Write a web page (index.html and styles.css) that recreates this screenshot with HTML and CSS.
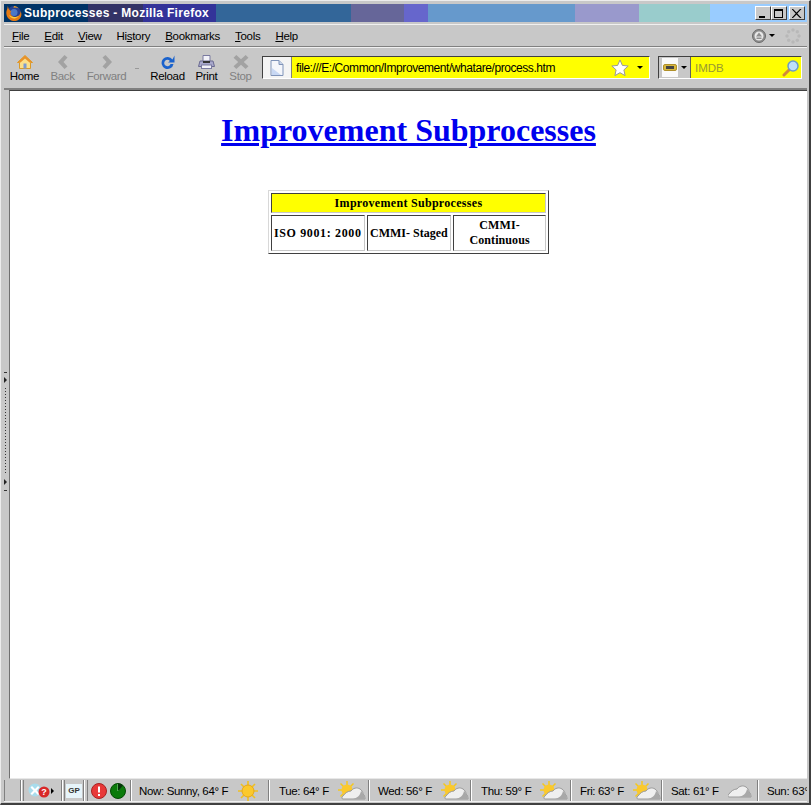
FILE: index.html
```html
<!DOCTYPE html>
<html lang="en">
<head>
<meta charset="utf-8">
<title>Subprocesses - Mozilla Firefox</title>
<link rel="stylesheet" href="styles.css">
</head>
<body>
<div class="window">
  <header class="titlebar">
    <svg class="fx-logo" width="17" height="17" viewBox="0 0 17 17"><circle cx="9" cy="8" r="7" fill="#27408f"/><circle cx="9" cy="7.500" r="3.500" fill="#4a78c8"/><path d="M2.500 1.500C3 3 2 4 1.500 6 .5 10 3 15 8 16c4 .7 7.500-2 8.300-5.500.3-1.500 0-3-.8-4.500.2 2.500-1 4.500-3 5.500-2.500 1-5 .3-6.300-1.500-1-1.300-.9-3 .3-4-1.500-.2-3-1.500-3.500-4.500z" fill="#e57a14"/><path d="M4 10c1 2.500 4 4 6.500 3.300 1.500-.4 2.800-1.500 3.500-2.800-1.500 1.300-3.500 1.800-5.500 1.500C7 11.700 5.300 11 4 10z" fill="#f9cf3c"/><path d="M9 1c2 0 3.500 1 4.500 2.500-1.500-1-3.500-1.300-5-.5z" fill="#f2a21f"/></svg>
    <span class="title-text">Subprocesses - Mozilla Firefox</span>
    <div class="win-controls">
      <button class="win-btn"><svg width="10" height="9" viewBox="0 0 10 9"><rect x="1" y="7" width="6" height="2" fill="#000"/></svg></button>
      <button class="win-btn"><svg width="10" height="9" viewBox="0 0 10 9"><path d="M0 0h9v9H0zM1 2v6h7V2z" fill="#000" fill-rule="evenodd"/></svg></button>
      <button class="win-btn win-btn-close"><svg width="10" height="9" viewBox="0 0 10 9"><path d="M1 0l3.500 3.500L8 0h1.500L5.300 4.500 9.500 9H8L4.500 5.500 1 9H-.5l4.200-4.500L-.5 0z" fill="#000"/></svg></button>
    </div>
  </header>

  <nav class="menubar">
    <span class="menu-item"><u>F</u>ile</span>
    <span class="menu-item"><u>E</u>dit</span>
    <span class="menu-item"><u>V</u>iew</span>
    <span class="menu-item">Hi<u>s</u>tory</span>
    <span class="menu-item"><u>B</u>ookmarks</span>
    <span class="menu-item"><u>T</u>ools</span>
    <span class="menu-item"><u>H</u>elp</span>
    <div class="menu-right">
      <svg width="14" height="14" viewBox="0 0 14 14"><circle cx="7" cy="7" r="6.500" fill="#8e8e8e" stroke="#6a6a6a"/><circle cx="7" cy="7" r="4.500" fill="#e8e8e8"/><path d="M7 3.500l3 4H4z" fill="#8e8e8e"/><rect x="4.500" y="8.500" width="5" height="1.500" fill="#8e8e8e"/></svg>
      <span class="tiny-arrow"></span>
      <svg class="throbber" width="16" height="16" viewBox="0 0 16 16"><g fill="#b8b8b8"><circle cx="8" cy="2" r="1.700"/><circle cx="12.300" cy="3.700" r="1.700"/><circle cx="14" cy="8" r="1.700"/><circle cx="12.300" cy="12.300" r="1.700"/><circle cx="8" cy="14" r="1.700"/><circle cx="3.700" cy="12.300" r="1.700"/><circle cx="2" cy="8" r="1.700"/><circle cx="3.700" cy="3.700" r="1.700"/></g></svg>
    </div>
  </nav>

  <div class="toolbar">
    <div class="tool tool-home">
      <svg width="16" height="14" viewBox="0 0 16 14"><path d="M8 .5L.5 7.500h2V13.500h11V7.500h2z" fill="#fbe08a" stroke="#d99a2a"/><path d="M8 .5L.5 7.500h3L8 3.500l4.500 4h3z" fill="#e8912a"/><rect x="6.500" y="8.500" width="3" height="5" fill="#7d9ad0"/></svg>
      <span>Home</span>
    </div>
    <div class="tool tool-back off">
      <svg width="12" height="14" viewBox="0 0 12 14"><path d="M7.500 0l3 2.500L6.500 7l4 4.500-3 2.500L1 7z" fill="#a2a2a2"/></svg>
      <span>Back</span>
    </div>
    <div class="tool tool-forward off">
      <svg width="12" height="14" viewBox="0 0 12 14"><path d="M4.500 0l-3 2.500L5.500 7l-4 4.500 3 2.500L11 7z" fill="#a2a2a2"/></svg>
      <span>Forward</span>
    </div>
    <span class="drop-mark"></span>
    <div class="tool tool-reload">
      <svg width="15" height="14" viewBox="0 0 15 14"><path d="M12.500 4.500A6 6 0 1 0 13.500 9h-3a3.200 3.200 0 1 1-.6-3L8 7.500h6.500V.5z" fill="#1a62cc"/></svg>
      <span>Reload</span>
    </div>
    <div class="tool tool-print">
      <svg width="17" height="14" viewBox="0 0 17 14"><path d="M5 .5h7v6H5z" fill="#f2f2f8" stroke="#7a7aa0"/><path d="M2 6h13l1.500 5.500H.5z" fill="#a8a8cc" stroke="#6a6a90"/><rect x="3.500" y="10" width="10" height="3.500" fill="#f2f2f8" stroke="#7a7aa0"/><rect x="5" y="6" width="7" height="2" fill="#333"/></svg>
      <span>Print</span>
    </div>
    <div class="tool tool-stop off">
      <svg width="16" height="15" viewBox="0 0 16 15"><path d="M3 0l5 4.500L13 0l3 3-5 4.500 5 4.500-3 3-5-4.500L3 15l-3-3 5-4.500L0 3z" fill="#a2a2a2"/></svg>
      <span>Stop</span>
    </div>
    <div class="urlbar">
      <span class="site-icon"><svg width="14" height="16" viewBox="0 0 14 16"><path d="M1 .5h8l4 4v11H1z" fill="#f4f6fb" stroke="#7f93b8"/><path d="M9 .5v4h4" fill="#c9d4ea" stroke="#7f93b8"/><path d="M2 8l9 7H2z" fill="#c8d8f4"/></svg></span>
      <span class="url-text">file:///E:/Common/Improvement/whatare/process.htm</span>
      <svg class="star" width="18" height="17" viewBox="0 0 18 17"><path d="M9 1l2.400 5.400 5.800.6-4.300 3.900 1.200 5.700L9 13.700l-5.100 2.900 1.200-5.700L.8 7l5.800-.6z" fill="#fff" stroke="#999"/></svg>
      <span class="tiny-arrow url-arrow"></span>
    </div>
    <div class="searchbar">
      <span class="engine"><span class="engine-icon"><svg width="14" height="7" viewBox="0 0 14 7"><rect x=".5" y=".5" width="13" height="6" rx="1.500" fill="#d8b840" stroke="#b0902a"/><rect x="3" y="2" width="8" height="3" fill="#444"/></svg></span><span class="tiny-arrow"></span></span>
      <span class="search-text">IMDB</span>
      <svg class="glass" width="18" height="18" viewBox="0 0 18 18"><path d="M7 11L2 16" stroke="#d08a3c" stroke-width="3" stroke-linecap="round"/><circle cx="11" cy="7" r="5" fill="#bfe0f8" stroke="#6a9cc8" stroke-width="1.500"/></svg>
    </div>
  </div>

  <div class="body-row">
    <aside class="sidebar">
      <span class="dash"></span>
      <span class="grip-arrow"></span>
      <span class="dots"></span>
      <span class="grip-arrow"></span>
      <span class="dash"></span>
    </aside>
    <main class="page">
      <h1 class="page-title"><a href="#">Improvement Subprocesses</a></h1>
      <table class="process-table">
        <tr><th colspan="3" class="head-cell">Improvement Subprocesses</th></tr>
        <tr>
          <td class="cell-iso">ISO 9001: 2000</td>
          <td class="cell-staged">CMMI- Staged</td>
          <td class="cell-cont">CMMI- Continuous</td>
        </tr>
      </table>
    </main>
  </div>

  <footer class="statusbar">
    <div class="panel panel-blank"></div>
    <div class="panel panel-tools">
      <svg width="26" height="15" viewBox="0 0 26 15"><circle cx="7" cy="7" r="6.500" fill="#a8dcec"/><path d="M4 3l3 3 3-3 1.500 1.500-3 3 3 3L10 12 7 9l-3 3-1.500-1.500 3-3-3-3z" fill="#fff"/><circle cx="16" cy="9" r="5.500" fill="#d82828"/><text x="16" y="12" class="q">?</text><path d="M23 5l3 3-3 3z" fill="#000"/></svg>
    </div>
    <div class="panel panel-gp"><span>GP</span></div>
    <div class="panel panel-alerts">
      <svg width="16" height="16" viewBox="0 0 16 16"><circle cx="8" cy="8" r="7.500" fill="#e83838" stroke="#a82020"/><rect x="7" y="3.500" width="2" height="6" fill="#fff"/><rect x="7" y="11" width="2" height="2" fill="#fff"/></svg>
      <svg width="16" height="16" viewBox="0 0 16 16"><circle cx="8" cy="8" r="7.500" fill="#0a7a0a" stroke="#044a04"/><path d="M8 8V1" stroke="#9ad89a"/><path d="M8 8V.5a7.500 7.500 0 0 1 5 2z" fill="#06350a"/></svg>
    </div>
    <div class="panel wx wx-now"><span class="wx-text">Now: Sunny, 64° F</span>
      <svg class="i-sun" width="20" height="20" viewBox="0 0 20 20"><g stroke="#f0c020" stroke-width="1.600"><path d="M10 0v20M0 10h20M3 3l14 14M17 3L3 17"/></g><circle cx="10" cy="10" r="6" fill="#fbc92c" stroke="#e8a818"/></svg>
    </div>
    <div class="panel wx wx-tue"><span class="wx-text">Tue: 64° F</span><svg class="i-pc" width="28" height="20" viewBox="0 0 28 20"><use href="#pc"/></svg></div>
    <div class="panel wx wx-wed"><span class="wx-text">Wed: 56° F</span><svg class="i-pc" width="28" height="20" viewBox="0 0 28 20"><use href="#pc"/></svg></div>
    <div class="panel wx wx-thu"><span class="wx-text">Thu: 59° F</span><svg class="i-pc" width="28" height="20" viewBox="0 0 28 20"><use href="#pc"/></svg></div>
    <div class="panel wx wx-fri"><span class="wx-text">Fri: 63° F</span><svg class="i-pc" width="28" height="20" viewBox="0 0 28 20"><use href="#pc"/></svg></div>
    <div class="panel wx wx-sat"><span class="wx-text">Sat: 61° F</span><svg class="i-cloud" width="24" height="14" viewBox="4 5 24 14"><use href="#cloud"/></svg></div>
    <div class="panel wx wx-sun"><span class="wx-text">Sun: 63°</span></div>
  </footer>
  <svg class="defs" width="0" height="0">
    <defs>
      <g id="cloud">
        <path d="M5 18c-1.500 0-1.500-2 0-3 2-3 5-5 8-5 2-3 6-4 9-2 2 1.500 3 3 3 5 1.500 1 2 3 2 5z" fill="#efefef" stroke="#9a9a9a"/>
        <path d="M15 18c4-1 7-3 8-8 1.500 1 2 2 2 3 1.500 1 2 3 2 5z" fill="#a8a8a8"/>
      </g>
      <g id="pc"><g stroke="#f6c81c" stroke-width="1.500"><path d="M9 0v18M0 9h18M2.500 2.500l13 13M15.500 2.500l-13 13"/></g><circle cx="9" cy="9" r="5.500" fill="#fbc92c"/><use href="#cloud"/></g>
    </defs>
  </svg>
</div>
</body>
</html>
```
FILE: styles.css
```css
* { box-sizing: border-box; }
html, body { margin: 0; padding: 0; height: 100%; overflow: hidden; }
body { background: #c8c8c8; font-family: "Liberation Sans", Arial, sans-serif; font-size: 12px; color: #000; }
.window {
  width: 811px; height: 805px; display: flex; flex-direction: column;
  padding: 3px 2px 1px 3px; background: #c8c8c8;
  border-top: 1px solid #ececec; border-left: 1px solid #ececec;
  border-right: 2px solid #404040; border-bottom: 2px solid #404040;
}
.titlebar {
  height: 18px; flex: none; display: flex; align-items: center; padding: 0 2px 0 1px;
  background: linear-gradient(to right,
    #003366 0 84px, #333366 84px 139px, #333399 139px 212px, #336699 212px 347px,
    #666699 347px 400px, #6666cc 400px 424px, #6699cc 424px 571px, #9999cc 571px 635px,
    #99cccc 635px 706px, #99ccff 706px 803px);
}
.fx-logo { flex: none; }
.title-text { margin-left: 2px; color: #fff; font-weight: bold; font-size: 12px; letter-spacing: .3px; font-family: "Liberation Sans", sans-serif; }
.win-controls { margin-left: auto; display: flex; }
.win-btn {
  width: 16px; height: 14px; padding: 0; display: flex; align-items: center; justify-content: center;
  background: #c8c8c8; border: 1px solid; border-color: #fff #404040 #404040 #fff;
}
.win-btn-close { margin-left: 2px; }
.menubar {
  height: 23px; flex: none; margin-top: 2px; display: flex; align-items: center; padding-left: 8px; gap: 15px;
  border-top: 1px solid #f0f0f0; border-bottom: 1px solid #808080;
}
.menu-item { font-size: 11.500px; letter-spacing: -0.3px; }
.menu-right { margin-left: auto; display: flex; align-items: center; padding-right: 6px; gap: 3px; }
.tiny-arrow { display: inline-block; width: 0; height: 0; border: 3px solid transparent; border-top-color: #000; border-bottom: 0; }
.throbber { margin-left: 7px; }
.toolbar {
  height: 43px; flex: none; display: flex; align-items: flex-start; padding-left: 6px;
  border-top: 1px solid #f0f0f0; border-bottom: 2px solid #808080;
}
.tool { display: flex; flex-direction: column; align-items: center; font-size: 11.500px; letter-spacing: -0.35px; padding-top: 7px; height: 39px; }
.tool svg { height: 14px; }
.tool span { margin-top: 1px; line-height: 13px; }
.tool.off { color: #808080; }
.tool-home { width: 29px; }
.tool-back { width: 25px; margin-left: 11px; }
.tool-forward { width: 39px; margin-left: 12px; }
.drop-mark { width: 4px; height: 1px; background: #999; margin: 20px 0 0 9px; }
.tool-reload { width: 35px; margin-left: 11px; }
.tool-print { width: 21px; margin-left: 11px; }
.tool-stop { width: 23px; margin-left: 12px; }
.urlbar {
  width: 388px; height: 23px; margin: 8px 0 0 10px; display: flex; align-items: center; background: #ffff00;
  border: 1px solid; border-color: #404040 #fff #fff #404040;
}
.site-icon { width: 29px; height: 21px; background: #f4f4f4; border-right: 1px solid #808080; display: flex; align-items: center; justify-content: center; flex: none; }
.url-text { margin-left: 4px; font-size: 12px; letter-spacing: -0.43px; }
.star { margin-left: auto; }
.url-arrow { margin: 0 6px 0 8px; }
.searchbar {
  width: 144px; height: 23px; margin: 8px 0 0 8px; display: flex; align-items: center; background: #ffff00;
  border: 1px solid; border-color: #404040 #fff #fff #404040;
}
.engine { width: 32px; height: 21px; background: #c8c8c8; border-right: 1px solid #606060; display: flex; align-items: center; padding-left: 3px; gap: 3px; flex: none; }
.engine-icon { width: 16px; height: 19px; background: #fafafa; display: flex; align-items: center; justify-content: center; }
.search-text { margin-left: 4px; color: #999933; font-size: 11.500px; letter-spacing: 0; }
.glass { margin-left: auto; margin-right: 1px; }
.body-row { flex: 1; min-height: 0; display: flex; margin-left: -3px; }
.sidebar { width: 8px; flex: none; display: flex; flex-direction: column; align-items: center; background: #c8c8c8; padding-top: 282px; }
.dash { width: 3px; height: 1px; background: #333; flex: none; }
.grip-arrow { width: 0; height: 0; border: 3px solid transparent; border-left-color: #222; border-right: 0; flex: none; margin: 4px 0 5px 1px; }
.dots { width: 1px; height: 87px; flex: none; background: repeating-linear-gradient(to bottom, #333 0 1px, transparent 1px 3px); }
.page { flex: 1; min-width: 0; background: #fff; border-top: 1px solid #404040; border-left: 1px solid #707070; border-bottom: 1px solid #e8e8e8; font-family: "Liberation Serif", "Times New Roman", serif; }
.page-title { margin: 21px 0 41px; text-align: center; font-size: 32px; font-weight: bold; line-height: 37px; }
.page-title a { color: #0000ee; }
.process-table {
  margin: 0 auto; width: 281px; height: 64px; border-collapse: separate; border-spacing: 2px; font-size: 12px; font-weight: bold;
  border: 1px solid; border-color: #d8d8d8 #404040 #404040 #d8d8d8;
}
.process-table th, .process-table td { padding: 1px; text-align: center; border: 1px solid; border-color: #404040 #c8c8c8 #c8c8c8 #404040; line-height: 15px; }
.head-cell { background: #ffff00; height: 20px; letter-spacing: .3px; }
.process-table .cell-iso { width: 94px; white-space: nowrap; letter-spacing: .65px; padding: 1px 0; }
.cell-staged { width: 85px; white-space: nowrap; }
.process-table .cell-cont { width: 94px; padding: 1px 10px; letter-spacing: .1px; }
.statusbar {
  height: 23px; flex: none; display: flex; align-items: stretch; padding-top: 1px; overflow: hidden;
  border-bottom: 1px solid #f0f0f0;
}
.panel { flex: none; display: flex; align-items: center; border-right: 1px solid #808080; font-size: 11.500px; }
.wx-text { white-space: nowrap; letter-spacing: -0.35px; }
.panel-blank { width: 17px; border-left: 1px solid #808080; box-shadow: 1px 0 0 #fff; }
.panel-tools { width: 39px; margin-left: 2px; padding-left: 4px; border-left: 1px solid #808080; box-shadow: 1px 0 0 #fff; }
.q { font: bold 9px "Liberation Sans", sans-serif; fill: #fff; text-anchor: middle; }
.panel-gp { width: 20px; margin-left: 2px; justify-content: center; border-left: 1px solid #808080; box-shadow: 1px 0 0 #fff; }
.panel-gp span { width: 16px; height: 14px; background: #e6f4fa; font: bold 8px/14px "Liberation Sans", sans-serif; color: #333; text-align: center; }
.panel-alerts { width: 44px; margin-left: 3px; padding-left: 3px; gap: 3px; border-left: 1px solid #808080; }
.wx { padding-left: 9px; box-shadow: inset 1px 0 0 #fff; }
.wx-now { width: 138px; padding-left: 8px; }
.wx-tue { width: 100px; padding-left: 10px; }
.wx-wed { width: 102px; }
.wx-thu { width: 100px; padding-left: 10px; }
.wx-fri { width: 91px; }
.wx-sat { width: 96px; }
.wx-sun { width: 50px; border-right: 0; }
.i-sun { margin-left: 10px; }
.i-pc { margin-left: 9px; }
.i-cloud { margin-left: 9px; }
.defs { position: absolute; }
```
